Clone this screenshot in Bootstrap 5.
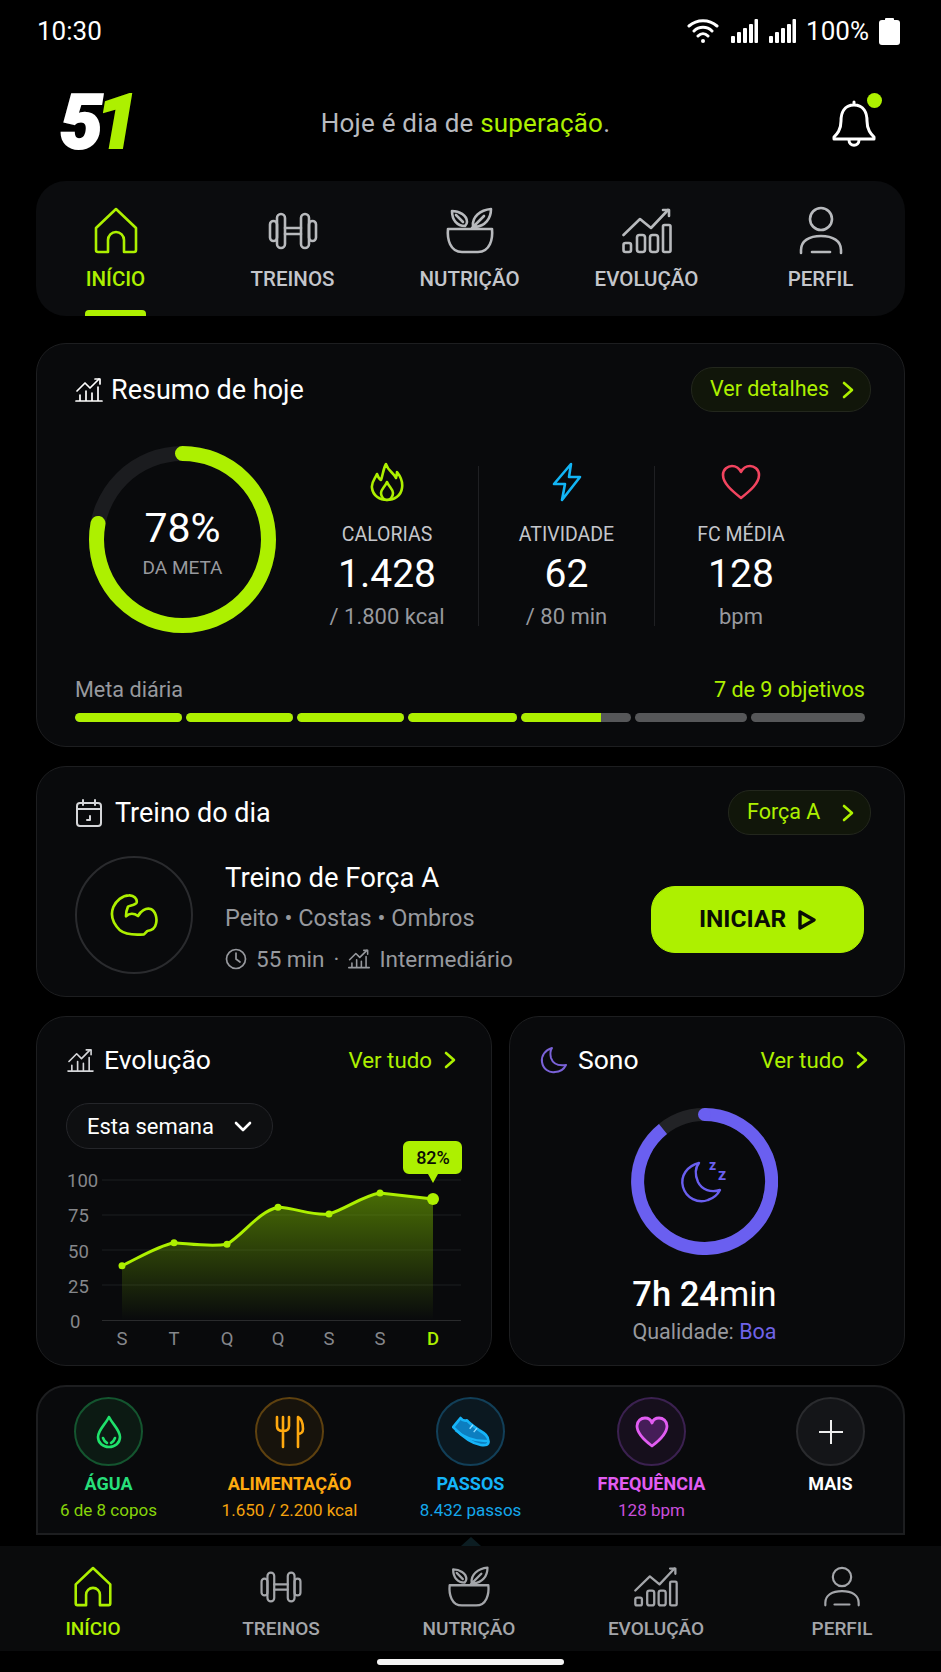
<!DOCTYPE html>
<html lang="pt-BR">
<head>
  <meta charset="UTF-8">
  <meta name="viewport" content="width=device-width, initial-scale=1">
  <title>51 - Início</title>
  <link href="https://cdn.jsdelivr.net/npm/bootstrap@5.3.0/dist/css/bootstrap.min.css" rel="stylesheet">
  <style>
    :root { --lime: #adf000; --muted: #97999e; --soft: #c4c6cb; }
    html, body { background: #000; }
    body { width: 941px; height: 1672px; overflow: hidden; color: #fff; font-family: Roboto, "Liberation Sans", sans-serif; }
    svg { display: block; }
    .ic { fill: none; stroke: currentColor; stroke-width: 2.6; stroke-linecap: round; stroke-linejoin: round; }
    .lime { color: var(--lime); }

    .status-bar { height: 62px; padding: 0 41px 0 37px; font-size: 26px; }
    .sig-pair { gap: 11px; margin-left: 4px; margin-right: 2px; }
    .pct { margin-right: 2px; }
    .wrap { padding: 0 36px; }
    .top-head { height: 119px; padding: 3px 28px 0 24px; }
    .logo-mark { font-weight: 900; font-style: italic; font-size: 76px; line-height: 1; letter-spacing: -7px; width: 74px; color: #fff; margin-top: -3px; -webkit-text-stroke: 2px currentColor; }
    .greet { font-size: 26px; color: #b9bbc0; letter-spacing: .2px; margin-right: 34px; }
    .bell-box { position: relative; width: 46px; }
    .bell-dot { position: absolute; top: -6px; right: -5px; width: 15px; height: 15px; border-radius: 50%; background: var(--lime); }

    .card-dark { --bs-card-bg: #090a0c; --bs-card-border-color: #1d1e20; --bs-card-border-radius: 30px; --bs-card-inner-border-radius: 29px; --bs-card-color: #fff; }
    .main-nav { height: 135px; background: #0b0c0e; border-radius: 30px; position: relative; overflow: hidden; }
    .nav-grid { display: grid; grid-template-columns: repeat(4, 177px) 171px; margin-left: -9px; padding-top: 25px; }
    .nav-cell { color: var(--soft); font-size: 20.5px; font-weight: 500; text-align: center; line-height: 28px; }
    .nav-cell svg { margin: 0 auto; height: 50px; color: #b8babd; }
    .nav-cell span { display: block; margin-top: 9px; }
    .nav-cell.on, .nav-cell.on svg { color: var(--lime); }
    .nav-bar-on { position: absolute; left: 49px; bottom: 0; width: 61px; height: 6px; background: var(--lime); border-radius: 4px 4px 0 0; }

    .head-row { padding: 23px 33px 0 38px; }
    .head-title { font-size: 27px; font-weight: 400; line-height: 34px; }
    .pill-link { --bs-btn-color: var(--lime); --bs-btn-hover-color: var(--lime); --bs-btn-bg: #11160a; --bs-btn-border-color: #23271d; --bs-btn-border-radius: 22px; height: 45px; padding: 0 16px 0 18px; font-size: 21.5px; display: flex; align-items: center; justify-content: space-between; }
    .pill-wide { width: 180px; }
    .pill-short { width: 143px; }

    .card-resume { margin-top: 27px; height: 404px; }
    .resume-body { padding-left: 52px; margin-top: 34px; }
    .ring-box { position: relative; width: 187px; height: 187px; margin-right: 20px; }
    .ring-txt { position: absolute; inset: 0; text-align: center; padding-top: 59px; }
    .ring-num { font-size: 41px; line-height: 46px; }
    .ring-sub { font-size: 19px; color: var(--muted); line-height: 30px; margin-top: 2px; }
    .stat-col { text-align: center; margin-top: 20px; height: 160px; }
    .stat-col + .stat-col { border-left: 1px solid #1f2023; }
    .stat-ico { height: 42px; margin-top: -5px; display: flex; justify-content: center; align-items: center; }
    .stat-lab { font-size: 19.5px; color: var(--soft); line-height: 30px; margin-top: 17px; }
    .stat-val { font-size: 39px; font-weight: 400; line-height: 46px; margin-top: 1px; }
    .stat-sub { font-size: 22px; color: var(--muted); line-height: 36px; margin-top: 2px; }
    .meta-row { padding: 0 39px 0 38px; margin-top: 42px; font-size: 21.6px; line-height: 30px; color: var(--muted); }
    .seg-row { display: flex; gap: 4px; padding: 0 39px 0 38px; margin-top: 8px; }
    .seg { height: 9px; border-radius: 5px; background: #565759; overflow: hidden; }
    .seg i { display: block; height: 100%; background: var(--lime); border-radius: 5px 0 0 5px; }

    .card-workout { margin-top: 19px; height: 231px; }
    .workout-body { padding: 23px 40px 0 38px; }
    .round-ico { width: 118px; height: 118px; border: 2px solid #2a2b2e; border-radius: 50%; flex: none; margin-top: -8px; }
    .wk-name { font-size: 27.5px; font-weight: 400; line-height: 40px; }
    .wk-sub { font-size: 23.5px; color: var(--muted); line-height: 41px; }
    .wk-meta { font-size: 22.5px; color: var(--muted); line-height: 40px; gap: 9px; }
    .go-btn { --bs-btn-bg: var(--lime); --bs-btn-color: #0a0d04; --bs-btn-border-color: var(--lime); --bs-btn-hover-bg: var(--lime); --bs-btn-hover-color: #0a0d04; width: 213px; height: 67px; border-radius: 24px; font-size: 24.5px; font-weight: 700; gap: 12px; margin-top: 2px; }

    .two-up { margin-top: 19px; gap: 17px; height: 350px; }
    .card-evo { width: 456px; flex: none; }
    .card-sleep { flex: 1 1 0; min-width: 0; }
    .mini-head { padding: 26px 0 0 30px; line-height: 34px; }
    .mini-title { font-size: 26.5px; font-weight: 400; gap: 10px; }
    .see-all { font-size: 22.3px; color: var(--lime); gap: 12px; }
    .week-sel { width: 207px; height: 46px; margin: 26px 0 0 29px; padding: 0 20px; font-size: 22px; background: #0e0f11; border: 1px solid #25262a; border-radius: 23px; }
    .chart-svg { margin-top: -8px; }
    .chart-svg text { font-family: Roboto, sans-serif; }
    .sleep-ring { position: relative; width: 147px; height: 147px; margin: 31px auto 0; left: -3px; }
    .sleep-ico { position: absolute; inset: 0; display: flex; align-items: center; justify-content: center; }
    .sleep-time { font-size: 34.5px; font-weight: 500; line-height: 44px; margin-top: 17px; }
    .sleep-time small { font-size: 34.5px; font-weight: 400; }
    .sleep-q { font-size: 21.5px; color: var(--muted); line-height: 30px; margin-top: 1px; }
    .sleep-q b { color: #6f63e8; font-weight: 400; }
    .sleep-txt { padding-right: 5px; }

    .quick-card { position: relative; margin-top: 19px; height: 150px; background: #090a0c; border: 2px solid #1d1e20; border-radius: 30px 30px 0 0; }
    .quick-grid { display: grid; grid-template-columns: repeat(4, 181px) 177px; margin-left: -20px; padding-top: 10px; }
    .quick-cell { text-align: center; }
    .quick-circ { width: 69px; height: 69px; border-radius: 50%; margin: 0 auto; border: 2px solid; display: flex; align-items: center; justify-content: center; }
    .quick-lab { font-size: 18px; font-weight: 700; line-height: 24px; margin-top: 6px; }
    .quick-sub { font-size: 17px; line-height: 26px; margin-top: 1px; }

    .bottom-nav { position: relative; height: 105px; margin-top: 11px; background: #0a0b0c; }
    .bottom-nav::before { content: ""; position: absolute; left: 461px; top: -9px; border: 10px solid transparent; border-top: 0; border-bottom: 9px solid #0c1d22; }
    .bot-grid { display: grid; grid-template-columns: 188px 188px 188px 186px 186px; margin-left: -1px; padding-top: 16px; }
    .bot-cell { color: #a4a6aa; font-size: 19px; font-weight: 500; text-align: center; line-height: 26px; }
    .bot-cell svg { margin: 0 auto; height: 50px; }
    .bot-cell span { display: block; margin-top: 4px; }
    .bot-cell.on { color: var(--lime); }
    .home-line { width: 187px; height: 6px; background: #f4f4f4; border-radius: 3px; margin: 8px auto 0; }
  </style>
</head>
<body>
  <svg width="0" height="0" style="position:absolute">
    <defs>
      <symbol id="i-home" viewBox="0 0 44 48"><path d="M22 2 42 21V43a2 2 0 0 1-2 2H30V33a8 8 0 0 0-16 0V45H4a2 2 0 0 1-2-2V21Z"/></symbol>
      <symbol id="i-dumb" viewBox="0 0 52 40"><rect x="10" y="3" width="8" height="34" rx="4"/><rect x="3" y="10" width="7" height="20" rx="3.5"/><rect x="34" y="3" width="8" height="34" rx="4"/><rect x="42" y="10" width="7" height="20" rx="3.5"/><path d="M18 17H34M18 23H34"/></symbol>
      <symbol id="i-bowl" viewBox="0 0 50 46"><path d="M3 21H47C48 31 45 44 33 44H17C5 44 2 31 3 21Z"/><path d="M20 18C12 18 7 12 7 3 14 3 22 7 22 14 22 16 21 17 20 18ZM11 7 18 14"/><path d="M28 18C27 9 35 2 46 1 46 11 40 18 30 19ZM39 8 27 20"/></symbol>
      <symbol id="i-chart" viewBox="0 0 50 46"><path d="M1.5 27 18 11 29 20 46 2"/><path d="M41 2H47V8"/><rect x="1.5" y="35" width="7.5" height="9" rx="2"/><rect x="15" y="27" width="8" height="17" rx="2.5"/><rect x="28" y="27" width="8" height="17" rx="2.5"/><rect x="41" y="17" width="7.5" height="27" rx="1.5"/></symbol>
      <symbol id="i-user" viewBox="0 0 48 50"><circle cx="24" cy="13" r="11"/><path d="M4 47V44C4 35 12 30 24 30S44 35 44 44V47"/><path d="M15 46H33"/></symbol>
      <symbol id="i-chev" viewBox="0 0 12 18"><path d="M2 2 10 9 2 16"/></symbol>
      <symbol id="i-chart-sm" viewBox="0 0 28 26"><path d="M2 14 10 6 15 11 24 2"/><path d="M20 2H25V7"/><path d="M1 24H27M5 24V18M11 24V14M17 24V16M23 24V10"/></symbol>
    </defs>
  </svg>

  <div class="status-bar d-flex justify-content-between align-items-center">
    <span>10:30</span>
    <div class="d-flex align-items-center gap-2">
      <svg width="32" height="26" viewBox="0 0 32 26" fill="none" stroke="#fff" stroke-width="3" stroke-linecap="round"><path d="M2 8C10 1 22 1 30 8M7 13C12 8 20 8 25 13M11 18C14 15 18 15 21 18"/><circle cx="16" cy="23" r="2" fill="#fff" stroke="none"/></svg>
      <div class="d-flex sig-pair">
        <svg width="27" height="24" viewBox="0 0 27 24" fill="#fff"><rect x="0" y="17" width="4" height="7" rx="1"/><rect x="6" y="13" width="4" height="11" rx="1"/><rect x="12" y="9" width="4" height="15" rx="1"/><rect x="18" y="5" width="4" height="19" rx="1"/><rect x="23.5" y="0" width="3.5" height="24" rx="1"/></svg>
        <svg width="27" height="24" viewBox="0 0 27 24" fill="#fff"><rect x="0" y="17" width="4" height="7" rx="1"/><rect x="6" y="13" width="4" height="11" rx="1"/><rect x="12" y="9" width="4" height="15" rx="1"/><rect x="18" y="5" width="4" height="19" rx="1"/><rect x="23.5" y="0" width="3.5" height="24" rx="1"/></svg>
      </div>
      <span class="pct">100%</span>
      <svg width="21" height="27" viewBox="0 0 21 27" fill="#fff"><rect x="6" y="0" width="9" height="3" rx="1"/><rect x="0" y="2" width="21" height="25" rx="3"/></svg>
    </div>
  </div>

  <div class="wrap">
    <header class="top-head d-flex justify-content-between align-items-center">
      <div class="logo-mark">5<span class="lime">1</span></div>
      <div class="greet">Hoje é dia de <span class="lime">superação</span>.</div>
      <div class="bell-box">
        <svg width="46" height="48" viewBox="0 0 46 48" fill="none" stroke="#fff" stroke-width="3" stroke-linecap="round" stroke-linejoin="round"><path d="M23 3V6M23 6C13 6 10 14 10 22 10 31 6 35 3 38V40H43V38C40 35 36 31 36 22 36 14 33 6 23 6Z"/><path d="M18 41C18 48 28 48 28 41"/></svg>
        <span class="bell-dot"></span>
      </div>
    </header>

    <nav class="main-nav">
      <div class="nav-grid">
        <div class="nav-cell on"><svg class="ic" width="44" height="50"><use href="#i-home"/></svg><span>INÍCIO</span></div>
        <div class="nav-cell"><svg class="ic" width="52" height="50"><use href="#i-dumb"/></svg><span>TREINOS</span></div>
        <div class="nav-cell"><svg class="ic" width="50" height="50"><use href="#i-bowl"/></svg><span>NUTRIÇÃO</span></div>
        <div class="nav-cell"><svg class="ic" width="50" height="50"><use href="#i-chart"/></svg><span>EVOLUÇÃO</span></div>
        <div class="nav-cell"><svg class="ic" width="48" height="50"><use href="#i-user"/></svg><span>PERFIL</span></div>
      </div>
      <div class="nav-bar-on"></div>
    </nav>

    <section class="card card-dark card-resume">
      <div class="head-row d-flex justify-content-between align-items-center">
        <div class="head-title d-flex align-items-center gap-2">
          <svg class="ic" width="28" height="26" style="stroke-width:1.7"><use href="#i-chart-sm"/></svg>
          Resumo de hoje
        </div>
        <a class="btn pill-link pill-wide">Ver detalhes <svg class="ic" width="12" height="18"><use href="#i-chev"/></svg></a>
      </div>
      <div class="resume-body d-flex align-items-start">
        <div class="ring-box">
          <svg width="187" height="187" viewBox="0 0 187 187" fill="none">
            <circle cx="93.5" cy="93.5" r="86" stroke="#1b1c1f" stroke-width="15"/>
            <circle cx="93.5" cy="93.5" r="86" stroke="#adf000" stroke-width="15" stroke-linecap="round" pathLength="100" stroke-dasharray="78 100" transform="rotate(-90 93.5 93.5)"/>
          </svg>
          <div class="ring-txt">
            <div class="ring-num">78%</div>
            <div class="ring-sub">DA META</div>
          </div>
        </div>
        <div class="stat-col" style="width:182px">
          <div class="stat-ico"><svg class="ic lime" width="34" height="40" viewBox="0 0 34 40"><path d="M16 2C18 9 24 11 26 16 27 13 27 12 27 10 31 15 33 20 32 26 31 34 24 38 17 38S3 34 2 26C1 20 5 17 7 12 8 15 9 17 11 18 13 13 13 7 16 2Z"/><path d="M17 20C15 25 11 27 11 31 11 35 14 38 17 38S23 35 23 31C23 27 19 25 17 20Z"/></svg></div>
          <div class="stat-lab">CALORIAS</div>
          <div class="stat-val">1.428</div>
          <div class="stat-sub">/ 1.800 kcal</div>
        </div>
        <div class="stat-col" style="width:176px">
          <div class="stat-ico"><svg class="ic" width="30" height="40" viewBox="0 0 30 40" style="color:#12b5f5"><path d="M19 2 2 22H13L10 38 28 15H17Z"/></svg></div>
          <div class="stat-lab">ATIVIDADE</div>
          <div class="stat-val">62</div>
          <div class="stat-sub">/ 80 min</div>
        </div>
        <div class="stat-col" style="width:173px">
          <div class="stat-ico"><svg class="ic" width="40" height="36" viewBox="0 0 40 36" style="color:#f2445f"><path d="M20 34C10 26 2 19 2 11 2 5 7 2 11 2 15 2 18 4 20 8 22 4 25 2 29 2 33 2 38 5 38 11 38 19 30 26 20 34Z"/></svg></div>
          <div class="stat-lab">FC MÉDIA</div>
          <div class="stat-val">128</div>
          <div class="stat-sub">bpm</div>
        </div>
      </div>
      <div class="meta-row d-flex justify-content-between">
        <span>Meta diária</span><span class="lime">7 de 9 objetivos</span>
      </div>
      <div class="seg-row">
        <div class="seg" style="width:107px"><i style="width:100%"></i></div>
        <div class="seg" style="width:108px"><i style="width:100%"></i></div>
        <div class="seg" style="width:107px"><i style="width:100%"></i></div>
        <div class="seg" style="width:109px"><i style="width:100%"></i></div>
        <div class="seg" style="width:110px"><i style="width:73%"></i></div>
        <div class="seg" style="width:113px"></div>
        <div class="seg" style="width:114px"></div>
      </div>
    </section>

    <section class="card card-dark card-workout">
      <div class="head-row d-flex justify-content-between align-items-center">
        <div class="head-title d-flex align-items-center gap-2">
          <svg class="ic" width="28" height="30" viewBox="0 0 28 30" style="color:#d5d6d9;stroke-width:2"><rect x="2" y="5" width="24" height="23" rx="3"/><path d="M2 11H26M8 2V7M20 2V7M12 22H15V18"/></svg>
          <span class="ms-1">Treino do dia</span>
        </div>
        <a class="btn pill-link pill-short">Força A <svg class="ic" width="12" height="18"><use href="#i-chev"/></svg></a>
      </div>
      <div class="workout-body d-flex align-items-center">
        <div class="round-ico d-flex align-items-center justify-content-center">
          <svg class="ic lime" width="50" height="45" viewBox="45 55 150 135" style="stroke-width:8"><path d="M78 170C58 150 48 125 58 100 66 82 85 65 105 65 120 64 130 76 128 86 126 94 110 95 102 99 97 110 96 120 96 128 106 118 120 118 132 127 140 112 155 102 170 106 185 112 190 135 186 150 183 165 172 170 160 172L150 182C125 184 95 184 78 170Z"/></svg>
        </div>
        <div class="ms-4 ps-2 flex-grow-1">
          <div class="wk-name">Treino de Força A</div>
          <div class="wk-sub">Peito • Costas • Ombros</div>
          <div class="wk-meta d-flex align-items-center">
            <svg class="ic" width="22" height="22" viewBox="0 0 22 22" style="stroke-width:1.7"><circle cx="11" cy="11" r="9.5"/><path d="M11 5V11L15 14"/></svg>
            <span>55 min</span><span>·</span>
            <svg class="ic" width="22" height="22" viewBox="0 0 28 26" style="stroke-width:2"><use href="#i-chart-sm"/></svg>
            <span>Intermediário</span>
          </div>
        </div>
        <button class="btn go-btn d-flex align-items-center justify-content-center">INICIAR
          <svg width="18" height="20" viewBox="0 0 18 20" fill="none" stroke="#0a0d04" stroke-width="3.4" stroke-linejoin="round"><path d="M2 2 16 10 2 18Z"/></svg>
        </button>
      </div>
    </section>

    <div class="two-up d-flex">
      <section class="card card-dark card-evo">
        <div class="mini-head d-flex justify-content-between align-items-center">
          <div class="mini-title d-flex align-items-center">
            <svg class="ic" width="27" height="25" viewBox="0 0 28 26" style="stroke-width:1.7;color:#d5d6d9"><use href="#i-chart-sm"/></svg>
            <span>Evolução</span>
          </div>
          <div class="see-all d-flex align-items-center" style="padding-right:35px">Ver tudo <svg class="ic" width="12" height="18"><use href="#i-chev"/></svg></div>
        </div>
        <div class="week-sel d-flex justify-content-between align-items-center">Esta semana
          <svg class="ic" width="18" height="11" viewBox="0 0 18 11"><path d="M2 2 9 9 16 2"/></svg>
        </div>
        <svg class="chart-svg" width="454" height="212" viewBox="37 1141 454 212">
          <defs>
            <linearGradient id="areaFill" x1="0" y1="0" x2="0" y2="1">
              <stop offset="0" stop-color="#6fa800" stop-opacity=".62"/>
              <stop offset="1" stop-color="#6fa800" stop-opacity="0"/>
            </linearGradient>
          </defs>
          <g stroke="#1d1e20" stroke-width="1.2">
            <path d="M102 1180H461M102 1215H461M102 1250H461M102 1285H461"/>
            <path d="M102 1320.5H461" stroke="#2a2b2d"/>
          </g>
          <path d="M122 1265.7 C140 1257 158 1246 174 1242.7 C192 1244 210 1247 227 1244.3 C245 1233 258 1212 278 1207.3 C296 1208 312 1216 329 1214 C346 1209 362 1196 380 1193 L433 1199 V1320 H122Z" fill="url(#areaFill)"/>
          <path d="M122 1265.7 C140 1257 158 1246 174 1242.7 C192 1244 210 1247 227 1244.3 C245 1233 258 1212 278 1207.3 C296 1208 312 1216 329 1214 C346 1209 362 1196 380 1193 L433 1199" fill="none" stroke="#adf000" stroke-width="3"/>
          <g fill="#adf000">
            <circle cx="122" cy="1265.7" r="3.5"/><circle cx="174" cy="1242.7" r="3.5"/><circle cx="227" cy="1244.3" r="3.5"/>
            <circle cx="278" cy="1207.3" r="3.5"/><circle cx="329" cy="1214" r="3.5"/><circle cx="380" cy="1193" r="3.5"/>
            <circle cx="433" cy="1199" r="6"/>
          </g>
          <path d="M409 1141H456a6 6 0 0 1 6 6V1168a6 6 0 0 1-6 6H438L433 1183 428 1174H409a6 6 0 0 1-6-6V1147a6 6 0 0 1 6-6Z" fill="#adf000"/>
          <text x="433" y="1164" text-anchor="middle" font-size="18" font-weight="500" fill="#0a0d04">82%</text>
          <g font-size="18.5" fill="#85878b">
            <text x="67" y="1187">100</text><text x="68" y="1222">75</text><text x="68" y="1258">50</text><text x="68" y="1293">25</text><text x="70" y="1328">0</text>
          </g>
          <g font-size="18.5" fill="#85878b" text-anchor="middle">
            <text x="122" y="1345">S</text><text x="174" y="1345">T</text><text x="227" y="1345">Q</text><text x="278" y="1345">Q</text><text x="329" y="1345">S</text><text x="380" y="1345">S</text>
            <text x="433" y="1345" fill="#adf000" font-weight="500">D</text>
          </g>
        </svg>
      </section>

      <section class="card card-dark card-sleep">
        <div class="mini-head d-flex justify-content-between align-items-center">
          <div class="mini-title d-flex align-items-center">
            <svg class="ic" width="28" height="28" viewBox="0 0 28 28" style="color:#7a62d8;stroke-width:2"><path d="M12 2C5 4 1 10 2 16 3 23 9 27 15 26 20 26 24 23 26 19 19 20 13 18 11 12 10 8 10 5 12 2Z"/></svg>
            <span>Sono</span>
          </div>
          <div class="see-all d-flex align-items-center" style="padding-right:36px">Ver tudo <svg class="ic" width="12" height="18"><use href="#i-chev"/></svg></div>
        </div>
        <div class="sleep-ring">
          <svg width="147" height="147" viewBox="0 0 147 147" fill="none">
            <circle cx="73.5" cy="73.5" r="67" stroke="#222326" stroke-width="13"/>
            <path d="M73.5 6.5A67 67 0 1 1 32 21" stroke="#6a5ff0" stroke-width="13"/>
            <circle cx="73.5" cy="6.5" r="6.5" fill="#6a5ff0"/>
          </svg>
          <div class="sleep-ico">
            <svg width="52" height="50" viewBox="0 0 52 50" fill="none" stroke="#6a5ff0" stroke-width="2.4" stroke-linejoin="round"><path d="M21 6C9 9 2 19 5 30 8 41 20 47 30 43 36 41 40 37 42 33 33 36 24 33 20 25 17 18 17 11 21 6Z"/><text x="31" y="13" font-family="Roboto, sans-serif" font-size="14" font-weight="700" fill="#6a5ff0" stroke="none">z</text><text x="40" y="23" font-family="Roboto, sans-serif" font-size="16" font-weight="700" fill="#6a5ff0" stroke="none">z</text></svg>
          </div>
        </div>
        <div class="sleep-txt text-center">
          <div class="sleep-time">7h 24<small>min</small></div>
          <div class="sleep-q">Qualidade: <b>Boa</b></div>
        </div>
      </section>
    </div>

    <section class="quick-card">
      <div class="quick-grid">
        <div class="quick-cell">
          <div class="quick-circ" style="border-color:#14552f;background:#0c1a13">
            <svg class="ic" width="26" height="34" viewBox="0 0 26 34" style="color:#1fe26b"><path d="M13 2C9 10 2 15 2 22 2 28 7 32 13 32S24 28 24 22C24 15 17 10 13 2Z"/><path d="M7 23C8 26 9 27 11 28M19 23C18 26 17 27 15 28"/></svg>
          </div>
          <div class="quick-lab" style="color:#27df7a">ÁGUA</div>
          <div class="quick-sub" style="color:#86d40a">6 de 8 copos</div>
        </div>
        <div class="quick-cell">
          <div class="quick-circ" style="border-color:#5e410f;background:#17130c">
            <svg class="ic" width="30" height="34" viewBox="0 0 30 34" style="color:#ffa90f"><path d="M2 2V11C2 15 5 16 8 16S14 15 14 11V2M8 2V32"/><path d="M23 32V2C27 4 28 10 28 14 28 17 26 19 23 19"/></svg>
          </div>
          <div class="quick-lab" style="color:#ffa90f">ALIMENTAÇÃO</div>
          <div class="quick-sub" style="color:#f5a30e">1.650 / 2.200 kcal</div>
        </div>
        <div class="quick-cell">
          <div class="quick-circ" style="border-color:#123f58;background:#0b1820">
            <svg width="38" height="31" viewBox="50 64 112 92"><path d="M53 97 62 86 75 70C80 76 86 80 94 77 100 84 110 92 130 106 145 115 158 122 158 140 158 150 150 152 135 150 110 146 80 125 53 97Z" fill="#0c7ec0" stroke="#16b4f8" stroke-width="8" stroke-linejoin="round"/><path d="M60 106C85 128 115 140 156 138" fill="none" stroke="#16b4f8" stroke-width="7"/><path d="M112 90 102 102M124 100 114 112" stroke="#8fdcff" stroke-width="4"/></svg>
          </div>
          <div class="quick-lab" style="color:#14b4f8">PASSOS</div>
          <div class="quick-sub" style="color:#14a7ea">8.432 passos</div>
        </div>
        <div class="quick-cell">
          <div class="quick-circ" style="border-color:#3b2150;background:#160f1c">
            <svg width="34" height="32" viewBox="0 0 34 32"><path d="M17 30C9 24 2 17 2 10 2 5 6 2 10 2 13 2 16 4 17 7 18 4 21 2 24 2 28 2 32 5 32 10 32 17 25 24 17 30Z" fill="#6d2a8a" fill-opacity=".55" stroke="#e25cf2" stroke-width="2.8" stroke-linejoin="round"/></svg>
          </div>
          <div class="quick-lab" style="color:#e25cf2">FREQUÊNCIA</div>
          <div class="quick-sub" style="color:#c94fdc">128 bpm</div>
        </div>
        <div class="quick-cell">
          <div class="quick-circ" style="border-color:#2a2b2e;background:#141518">
            <svg width="26" height="26" viewBox="0 0 26 26" stroke="#eee" stroke-width="2"><path d="M13 1V25M1 13H25"/></svg>
          </div>
          <div class="quick-lab">MAIS</div>
        </div>
      </div>
    </section>
  </div>

  <nav class="bottom-nav">
    <div class="bot-grid">
      <div class="bot-cell on"><svg class="ic" width="38" height="50" viewBox="0 0 38 42" style="stroke-width:3"><use href="#i-home"/></svg><span>INÍCIO</span></div>
      <div class="bot-cell"><svg class="ic" width="44" height="50"><use href="#i-dumb"/></svg><span>TREINOS</span></div>
      <div class="bot-cell"><svg class="ic" width="44" height="50"><use href="#i-bowl"/></svg><span>NUTRIÇÃO</span></div>
      <div class="bot-cell"><svg class="ic" width="44" height="50"><use href="#i-chart"/></svg><span>EVOLUÇÃO</span></div>
      <div class="bot-cell"><svg class="ic" width="40" height="50"><use href="#i-user"/></svg><span>PERFIL</span></div>
    </div>
  </nav>
  <div class="home-line"></div>

  <script src="https://cdn.jsdelivr.net/npm/bootstrap@5.3.0/dist/js/bootstrap.bundle.min.js"></script>
</body>
</html>
